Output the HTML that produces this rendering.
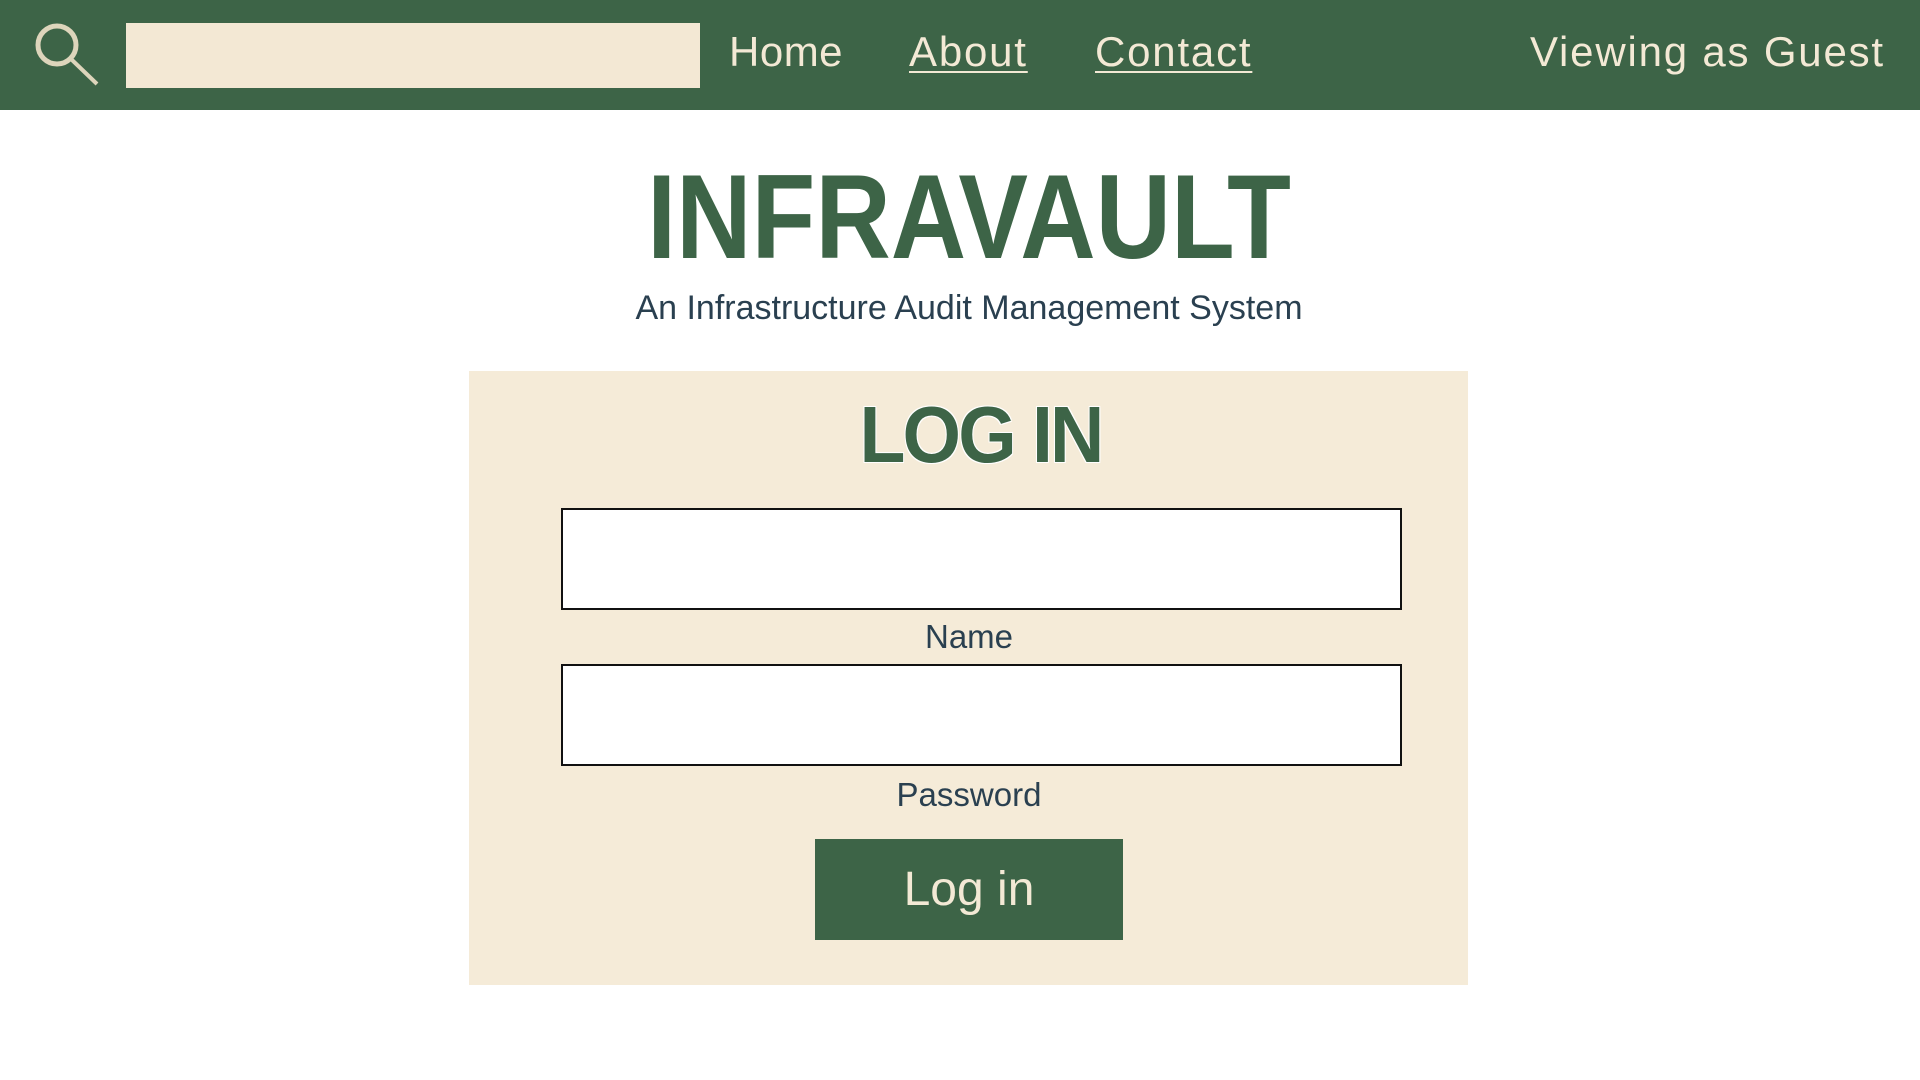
<!DOCTYPE html>
<html><head><style>
body{margin:0;width:1920px;height:1080px;background:#fff;font-family:"Liberation Sans",sans-serif;position:relative;overflow:hidden}
.nav{position:absolute;left:0;top:0;width:1920px;height:110px;background:#3d6447}
.a{position:absolute;color:#f3e9d5;font-size:42px;top:26px;line-height:52px;white-space:nowrap;letter-spacing:1.8px}
.u{text-decoration:underline;text-decoration-thickness:2px;text-underline-offset:5px}
.c{position:absolute;text-align:center;white-space:nowrap}
.inp{position:absolute;left:561px;width:837px;height:98px;background:#fff;border:2px solid #111}
</style></head><body>
<div class="nav">
<svg style="position:absolute;left:30px;top:20px" width="75" height="70" viewBox="0 0 75 70"><circle cx="27" cy="25" r="19" fill="none" stroke="#ddd5bb" stroke-width="5"/><line x1="41" y1="39" x2="67" y2="64" stroke="#ddd5bb" stroke-width="4"/></svg>
<div style="position:absolute;left:126px;top:23px;width:574px;height:65px;background:#f3e8d4"></div>
<div class="a" style="left:729px;letter-spacing:0.5px">Home</div>
<div class="a u" style="left:909px">About</div>
<div class="a u" style="left:1095px">Contact</div>
<div class="a" style="left:1530px">Viewing as Guest</div>
</div>
<div class="c" style="left:0;width:1938px;top:152px;font-size:120px;font-weight:bold;color:#3d6447;line-height:130px;transform:scaleX(0.87);transform-origin:center 0">INFRAVAULT</div>
<div class="c" style="left:0;width:1938px;top:288px;font-size:34px;color:#2a4050;line-height:40px">An Infrastructure Audit Management System</div>
<div style="position:absolute;left:469px;top:371px;width:999px;height:614px;background:#f5ebd8"></div>
<div class="c" style="left:469px;width:1023px;top:390px;font-size:80px;font-weight:bold;color:#3d6447;line-height:90px;letter-spacing:-3px;transform:scaleX(0.94);transform-origin:center 0;text-shadow:0 0 2px #fff,1px 1px 0 #fff,-1px -1px 0 #fff,1px -1px 0 #fff,-1px 1px 0 #fff">LOG IN</div>
<div class="inp" style="top:508px"></div>
<div class="c" style="left:0;width:1938px;top:618px;font-size:33px;color:#2a4050;line-height:38px">Name</div>
<div class="inp" style="top:664px"></div>
<div class="c" style="left:0;width:1938px;top:776px;font-size:33px;color:#2a4050;line-height:38px">Password</div>
<div class="c" style="left:815px;width:308px;top:839px;height:101px;background:#3d6447;color:#f3e9d5;font-size:48px;line-height:101px">Log in</div>
</body></html>
